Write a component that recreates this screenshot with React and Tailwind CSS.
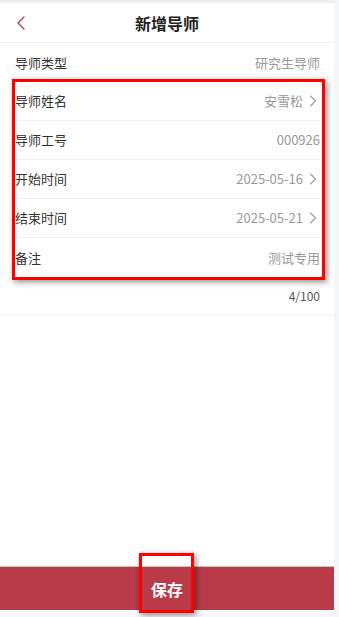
import React from 'react';
import { ChevronLeft, ChevronRight } from 'lucide-react';

const rows = [
  { label: '导师姓名', value: '安雪松', arrow: true },
  { label: '导师工号', value: '000926' },
  { label: '开始时间', value: '2025-05-16', arrow: true },
  { label: '结束时间', value: '2025-05-21', arrow: true },
  { label: '备注', value: '测试专用' },
];

const Row = ({ label, value, arrow, last }) => (
  <div className={`flex items-center justify-between h-[39px] ml-[15px] mr-[14px] ${last ? '' : 'border-b border-[#f0f0f0]'}`}>
    <span className="text-[13px] text-[#333]">{label}</span>
    <span className="flex items-center text-[13px] text-[#999]">
      {value}
      {arrow && <ChevronRight className="w-[20px] h-[20px] -mr-[3px] text-[#999]" strokeWidth={1.3} />}
    </span>
  </div>
);

const App = () => {
  return (
    <div
      className="relative flex w-[339px] h-[617px] bg-[#f5f6fa] overflow-hidden"
      style={{ fontFamily: '"Noto Sans CJK SC", "Noto Sans", sans-serif' }}
    >
      <div className="flex flex-col w-[334px] h-full">
        <div className="h-[3px] bg-[#eceef3]" />
        <div className="relative flex items-center justify-center h-[40px] bg-white border-b border-[#f0f0f0]">
          <ChevronLeft className="absolute left-[9px] w-[24px] h-[24px] text-[#b0404f]" strokeWidth={1.4} />
          <span className="text-[16px] font-bold text-[#222]">新增导师</span>
        </div>
        <div className="bg-white">
          <div className="flex items-center justify-between h-[39px] ml-[15px] mr-[14px]">
            <span className="text-[13px] text-[#333]">导师类型</span>
            <span className="text-[13px] text-[#999]">研究生导师</span>
          </div>
          {rows.map((r, i) => (
            <Row key={r.label} {...r} last={i === rows.length - 1} />
          ))}
          <div className="flex items-center justify-end h-[39px] px-[14px] border-b border-[#f0f0f0]">
            <span className="text-[12px] text-[#555]">4/100</span>
          </div>
        </div>
        <div className="flex-1 bg-white" />
        <div className="h-px bg-[#c8c8c8]" />
        <div className="flex items-center justify-center h-[43px] bg-[#b93a48]">
          <span className="text-[16px] font-bold text-white">保存</span>
        </div>
        <div className="h-[7px] bg-[#f7f8fc]" />
      </div>

      <div className="absolute left-[12px] top-[79px] w-[313px] h-[201px] border-[3px] border-[#ff0000] shadow-[2px_2px_6px_rgba(0,0,0,0.45)]" />
      <div className="absolute left-[139px] top-[553px] w-[55px] h-[60px] border-[3px] border-[#ff0000] shadow-[2px_2px_6px_rgba(0,0,0,0.45)]" />
    </div>
  );
};

export default App;
